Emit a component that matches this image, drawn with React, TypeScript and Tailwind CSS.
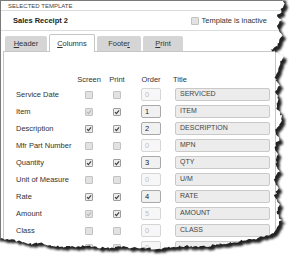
import React from 'react';

type Mark = 'on' | 'off' | 'dis';

type Row = {
  label: string;
  screen: Mark;
  print: Mark;
  order: string;
  live: boolean;
  title: string;
};

const rows: Row[] = [
  { label: 'Service Date', screen: 'off', print: 'off', order: '0', live: false, title: 'SERVICED' },
  { label: 'Item', screen: 'dis', print: 'on', order: '1', live: true, title: 'ITEM' },
  { label: 'Description', screen: 'on', print: 'on', order: '2', live: true, title: 'DESCRIPTION' },
  { label: 'Mfr Part Number', screen: 'off', print: 'off', order: '0', live: false, title: 'MPN' },
  { label: 'Quantity', screen: 'on', print: 'on', order: '3', live: true, title: 'QTY' },
  { label: 'Unit of Measure', screen: 'off', print: 'off', order: '0', live: false, title: 'U/M' },
  { label: 'Rate', screen: 'on', print: 'on', order: '4', live: true, title: 'RATE' },
  { label: 'Amount', screen: 'dis', print: 'on', order: '5', live: false, title: 'AMOUNT' },
  { label: 'Class', screen: 'off', print: 'off', order: '0', live: false, title: 'CLASS' },
  { label: 'Other', screen: 'off', print: 'off', order: '0', live: false, title: '' },
];

function Box({ state }: { state: Mark }) {
  return (
    <span
      className={`flex h-[8px] w-[8px] items-center justify-center rounded-[1px] border ${
        state === 'on' ? 'border-[#9d9d9d] bg-[#ededed]' : 'border-[#c2c2c2] bg-[#e2e2e2]'
      }`}
    >
      {state !== 'off' && (
        <svg width="6" height="6" viewBox="0 0 6 6">
          <path
            d="M1 3.1 L2.4 4.6 L5.1 1.3"
            fill="none"
            stroke={state === 'on' ? '#3b3b3b' : '#b5b5b5'}
            strokeWidth="1.1"
          />
        </svg>
      )}
    </span>
  );
}

// torn paper edge, right side then bottom
const edge: [number, number][] = [
  [283, -4], [284, 4], [281, 9], [282, 12], [277, 16], [281, 21], [276, 26], [280, 31],
  [282, 36], [279, 42], [277, 46], [271, 50], [283, 56], [280, 62], [278, 70], [275, 78],
  [279, 85], [276, 92], [279, 100], [276, 108], [282, 116], [280, 124], [275, 132],
  [279, 140], [274, 148], [278, 156], [275, 164], [279, 172], [274, 180], [278, 188],
  [275, 196], [279, 204], [276, 212], [281, 219], [278, 226], [275, 232], [268, 236],
  [260, 238], [245, 240], [232, 243], [215, 245], [200, 247], [185, 246], [170, 247],
  [155, 249], [140, 248], [120, 247], [100, 248], [85, 246], [67, 247], [50, 245],
  [40, 243], [30, 244], [22, 242], [12, 240], [5, 239], [-4, 238],
];

function rough(pts: [number, number][]) {
  let seed = 11;
  const rnd = () => {
    seed = (seed * 9301 + 49297) % 233280;
    return seed / 233280;
  };
  const out: [number, number][] = [];
  for (let i = 0; i < pts.length - 1; i++) {
    const [x1, y1] = pts[i];
    const [x2, y2] = pts[i + 1];
    const n = Math.max(1, Math.round(Math.hypot(x2 - x1, y2 - y1) / 2));
    for (let k = 0; k < n; k++) {
      const t = k / n;
      out.push([x1 + (x2 - x1) * t + (rnd() - 0.5) * 2.4, y1 + (y2 - y1) * t + (rnd() - 0.5) * 2.4]);
    }
  }
  out.push(pts[pts.length - 1]);
  return out;
}

const paper =
  'M-4 -4 ' +
  rough(edge)
    .map(([x, y]) => `L${x.toFixed(1)} ${y.toFixed(1)}`)
    .join(' ') +
  ' Z';
const outside = `M-10 -10 H310 V277 H-10 Z ${paper}`;

function Tear() {
  return (
    <svg className="pointer-events-none absolute left-0 top-0" width="300" height="267" viewBox="0 0 300 267">
      <defs>
        <clipPath id="out">
          <path d={outside} clipRule="evenodd" />
        </clipPath>
        <filter id="soft" x="-10%" y="-10%" width="120%" height="120%">
          <feGaussianBlur stdDeviation="1.1" />
        </filter>
      </defs>
      <path d={outside} fill="#ffffff" fillRule="evenodd" />
      <g clipPath="url(#out)">
        <path d={paper} transform="translate(3.5 3.5)" fill="#222222" filter="url(#soft)" />
      </g>
    </svg>
  );
}

function Tab({ label, under, active, w }: { label: string; under: number; active?: boolean; w: string }) {
  const a = label.slice(0, under);
  const u = label.slice(under, under + 1);
  const b = label.slice(under + 1);
  return (
    <div
      className={`${w} flex items-center justify-center rounded-t-[2px] text-[7.5px] text-[#333] ${
        active
          ? 'relative z-10 -mb-px h-[18px] border border-b-0 border-[#c6c6c6] bg-white'
          : 'h-[15px] bg-[#d5d5d5]'
      }`}
    >
      {a}
      <span className="underline">{u}</span>
      {b}
    </div>
  );
}

export default function App() {
  return (
    <div className="relative h-[267px] w-[300px] overflow-hidden bg-white font-['Liberation_Sans',Arial,sans-serif] text-[#333]">
      <div className="h-[267px] w-[300px] border-l border-t border-[#7a7a7a]">
        <div className="h-[9px] pl-[7px] pt-[2px] text-[6px] leading-[7px] text-[#444]">SELECTED TEMPLATE</div>

        <div className="flex h-[21px] items-center border-y border-[#dcdcdc] pl-[12px] pr-[33px]">
          <span className="text-[7.5px] font-bold text-[#222]">Sales Receipt 2</span>
          <span className="ml-auto flex items-center gap-[3px] text-[7.5px] text-[#333]">
            <Box state="off" />
            Template is inactive
          </span>
        </div>

        <div className="ml-[2px] mt-[2px] flex h-[18px] items-end gap-[2px] pl-[2px]">
          <Tab label="Header" under={0} w="w-[42px]" />
          <Tab label="Columns" under={0} w="w-[46px]" active />
          <Tab label="Footer" under={5} w="w-[44px]" />
          <Tab label="Print" under={0} w="w-[40px]" />
        </div>

        <div className="ml-[2px] w-[273px] border-l border-r border-t border-[#c6c6c6] pt-[22px]">
          <div className="flex h-[12px] items-center text-[7.5px] text-[#333]">
            <div className="w-[76px]" />
            <div className="flex w-[18px] justify-center whitespace-nowrap">Screen</div>
            <div className="ml-[10px] flex w-[18px] justify-center">Print</div>
            <div className="ml-[15px] flex w-[20px] justify-center">Order</div>
            <div className="ml-[12px]">Title</div>
          </div>

          {rows.map((r) => (
            <div key={r.label} className="flex h-[17px] items-center text-[7.5px]">
              <div className="w-[76px] pl-[12px] whitespace-nowrap text-[#333]">{r.label}</div>
              <div className="flex w-[18px] justify-center">
                <Box state={r.screen} />
              </div>
              <div className="ml-[10px] flex w-[18px] justify-center">
                <Box state={r.print} />
              </div>
              <div
                className={`ml-[15px] flex h-[13px] w-[20px] items-center rounded-[2px] border pl-[3px] text-[7.5px] ${
                  r.live ? 'border-[#a9a9a9] bg-[#f1f1f1] text-[#222]' : 'border-[#d6d6d6] bg-[#f7f7f7] text-[#c2c2c2]'
                }`}
              >
                {r.order}
              </div>
              <div className="ml-[14px] flex h-[13px] w-[95px] items-center rounded-[2px] border border-[#c9c9c9] bg-[#ececec] pl-[4px] text-[7px] text-[#444]">
                {r.title}
              </div>
            </div>
          ))}
        </div>
      </div>
      <Tear />
    </div>
  );
}
